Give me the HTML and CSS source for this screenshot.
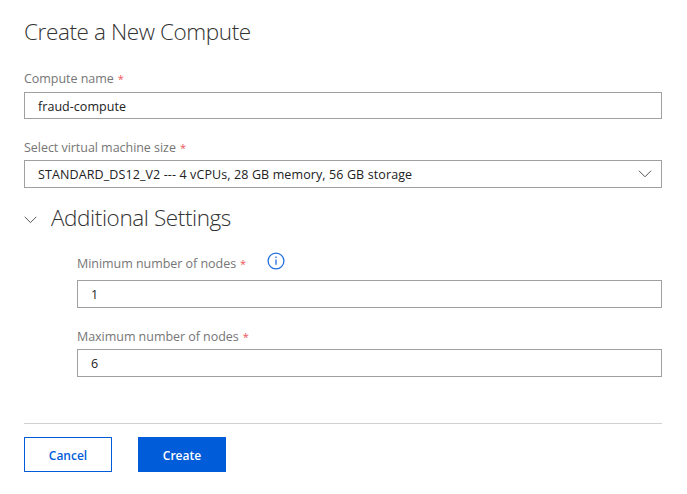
FILE: index.html
```html
<!DOCTYPE html>
<html lang="en">
<head>
<meta charset="utf-8">
<title>Create a New Compute</title>
<link rel="stylesheet" href="styles.css">
</head>
<body>
<main class="panel">
  <h1 class="title"><span>Create a New Compute</span></h1>
  <div class="label name-label"><span>Compute name</span><span class="req">*</span></div>
  <div class="field field-short"><span class="name-value">fraud-compute</span></div>
  <div class="label size-label"><span>Select virtual machine size</span><span class="req">*</span></div>
  <div class="field select"><span class="size-value">STANDARD_DS12_V2 --- 4 vCPUs, 28 GB memory, 56 GB storage</span>
    <svg class="chevron" width="14" height="8" viewBox="0 0 14 8"><path d="M.9.7 7 6.8 13.1.7"/></svg>
  </div>
  <h2 class="section">
    <svg class="chevron" width="13" height="8" viewBox="0 0 13 8"><path d="M.7.8 6.5 6.6 12.3.8"/></svg>
    <span>Additional Settings</span>
  </h2>
  <div class="nested">
    <div class="label min-label"><span>Minimum number of nodes</span><span class="req">*</span>
      <svg class="info" width="18" height="18" viewBox="0 0 18 18"><circle cx="9" cy="9" r="7.9"/><path d="M9 7.4v5.4M9 4.5v1.5"/></svg>
    </div>
    <div class="field"><span>1</span></div>
    <div class="label max-label"><span>Maximum number of nodes</span><span class="req">*</span></div>
    <div class="field"><span>6</span></div>
  </div>
  <div class="actions">
    <button class="btn">Cancel</button>
    <button class="btn primary">Create</button>
  </div>
</main>
</body>
</html>
```
FILE: styles.css
```css
* { box-sizing: border-box; }
body { margin: 0; background: #fff; font: 12.5px/18px "Open Sans", "Noto Sans", sans-serif; color: #222; }
.panel { width: 638px; margin-left: 24px; padding-top: 16px; }
.title, .section { margin: 0; font-size: 22.5px; font-weight: 300; line-height: 32px; letter-spacing: -.4px; color: #333; white-space: nowrap; }
.title { height: 53px; }
.label { display: flex; color: #767676; white-space: nowrap; letter-spacing: -.04px; }
.req { margin-left: 4px; color: #e81123; opacity: .75; font-size: 11px; }
.name-label { height: 23px; padding-top: 1px; }
.field { display: flex; align-items: center; height: 28px; padding: 2px 9px 0 13px; border: 1px solid #a0a0a0; white-space: nowrap; }
.field-short { height: 27px; }
.name-value { letter-spacing: .04px; }
.size-value { letter-spacing: .11px; }
.size-label { height: 41px; padding-top: 20px; }
.select { justify-content: space-between; }
.select .chevron { margin-top: -2px; }
.chevron { fill: none; stroke: #555; stroke-width: 1; flex: none; }
.section { display: flex; align-items: center; height: 62px; padding-bottom: 2px; gap: 14px; }
.section .chevron { margin-top: 4px; }
.nested { margin-left: 53px; }
.min-label { height: 30px; padding-top: 5px; }
.info { margin: -3px 0 0 21px; fill: none; stroke: #1f6fe0; stroke-width: 1.3; }
.max-label { height: 41px; padding-top: 20px; }
.actions { display: flex; gap: 26px; margin-top: 46px; padding-top: 13px; border-top: 1px solid #d2d2d2; }
.btn { width: 88px; height: 35px; padding: 2px 0 0; border: 1px solid #015cda; background: #fff; color: #015cda; font: 600 12px/18px "Open Sans", sans-serif; }
.primary { background: #015cda; color: #fff; }
```
